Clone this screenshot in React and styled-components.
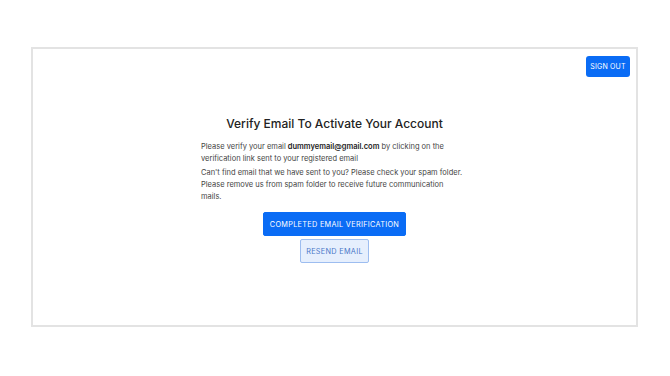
import React from 'react'
import styled, { createGlobalStyle } from 'styled-components'

const GlobalStyle = createGlobalStyle`
    html, body {
        margin: 0;
        padding: 0;
        background: #ffffff;
    }
    body {
        font-family: Inter, "Noto Sans", "Liberation Sans", sans-serif;
    }
`

function App() {
    return (
        <Page>
            <GlobalStyle />
            <Frame>
                <TopBar>
                    <SignOut>Sign out</SignOut>
                </TopBar>

                <Content>
                    <Title>Verify Email To Activate Your Account</Title>
                    <TextBlock>
                        <Para>
                            Please verify your email <b>dummyemail@gmail.com</b> by clicking on the<br />
                            verification link sent to your registered email
                        </Para>
                        <Para>
                            Can't find email that we have sent to you? Please check your spam folder.<br />
                            Please remove us from spam folder to receive future communication<br />
                            mails.
                        </Para>
                    </TextBlock>
                    <Actions>
                        <Button>Completed Email Verification</Button>
                        <Button light>Resend Email</Button>
                    </Actions>
                </Content>
            </Frame>
        </Page>
    )
}

export default App

const Page = styled.div`
    padding: 47px 32px 49px 31px;
`

const Frame = styled.div`
    height: 280px;
    box-sizing: border-box;
    border: 2px solid #e3e3e3;
    display: flex;
    flex-direction: column;
`

const TopBar = styled.div`
    display: flex;
    justify-content: flex-end;
    padding: 7px 6px 0 0;
`

const SignOut = styled.button`
    width: 44px;
    height: 21px;
    border: none;
    border-radius: 3px;
    background: #0a6cf5;
    color: #fff;
    font-family: inherit;
    font-size: 7px;
    font-weight: 400;
    letter-spacing: 0.2px;
    text-transform: uppercase;
    padding: 0;
`

const Content = styled.div`
    display: flex;
    flex-direction: column;
    align-items: center;
    padding-top: 39px;
`

const Title = styled.h1`
    margin: 0 0 10px;
    font-size: 12px;
    font-weight: 500;
    color: #222;
`

const TextBlock = styled.div`
    width: 264px;
    margin-left: -3px;
    white-space: nowrap;
`

const Para = styled.p`
    margin: 0 0 2px;
    font-size: 7.5px;
    line-height: 12px;
    color: #444;

    b {
        font-weight: 600;
        color: #222;
    }
`

const Actions = styled.div`
    display: flex;
    flex-direction: column;
    align-items: center;
    gap: 3px;
    margin-top: 7px;
`

const Button = styled.button`
    height: 24px;
    padding: 0 ${props => props.light ? '5px' : '6px'};
    border-radius: 2px;
    border: 1px solid ${props => props.light ? '#9dbdf0' : '#0a6cf5'};
    background: ${props => props.light ? '#e6effd' : '#0a6cf5'};
    color: ${props => props.light ? '#4a78c8' : '#fff'};
    font-family: inherit;
    font-size: 7.3px;
    font-weight: 400;
    letter-spacing: 0.3px;
    text-transform: uppercase;
`
